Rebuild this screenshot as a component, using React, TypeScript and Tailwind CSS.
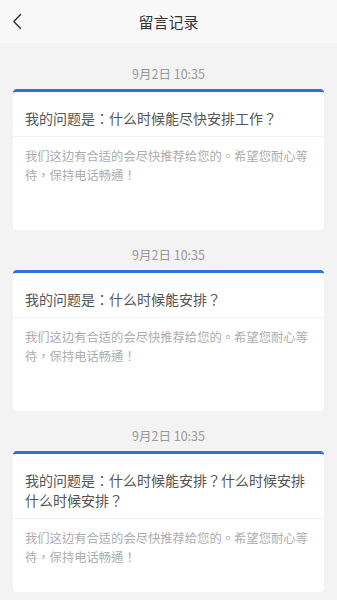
import React from 'react';

const FONT = "font-['Noto_Sans_CJK_TC','Noto_Sans',sans-serif]";

const ITEMS = [
  { date: '9月2日 10:35', q: '我的问题是：什么时候能尽快安排工作？', a: '我们这边有合适的会尽快推荐给您的。希望您耐心等待，保持电话畅通！' },
  { date: '9月2日 10:35', q: '我的问题是：什么时候能安排？', a: '我们这边有合适的会尽快推荐给您的。希望您耐心等待，保持电话畅通！' },
  { date: '9月2日 10:35', q: '我的问题是：什么时候能安排？什么时候安排什么时候安排？', a: '我们这边有合适的会尽快推荐给您的。希望您耐心等待，保持电话畅通！' },
];

export default function App() {
  return (
    <div className={`${FONT} w-[337px] h-[600px] overflow-hidden bg-[#f3f3f3]`}>
      {/* Header */}
      <div className="relative h-[43px] bg-[#f8f8f8] flex items-center justify-center">
        <svg className="absolute left-[12px] top-[13px]" width="10" height="17" viewBox="0 0 10 17" fill="none">
          <path d="M8.5 1.5 L1.8 8.5 L8.5 15.5" stroke="#333" strokeWidth="1.4" strokeLinecap="round" strokeLinejoin="round" />
        </svg>
        <span className="text-[15px] text-[#333] leading-none">留言记录</span>
      </div>

      {/* List */}
      <div className="pt-[6px] px-[13px]">
        {ITEMS.map((it, i) => (
          <div key={i} className="mt-[10px]">
            <div className="h-[30px] flex items-center justify-center text-[12.5px] text-[#999]">{it.date}</div>
            <div className="h-[141px] flex flex-col bg-white rounded-[4px] border-t-[3px] border-[#2f6fde] overflow-hidden">
              <div className="px-[12px] pt-[16px] pb-[8px] text-[14px] leading-[20px] text-[#555]">{it.q}</div>
              <div className="h-px bg-[#f2f2f2]" />
              <div className="flex-1 px-[12px] pt-[10px] text-[12.3px] leading-[19px] text-[#adadad]">{it.a}</div>
            </div>
          </div>
        ))}
      </div>
    </div>
  );
}
